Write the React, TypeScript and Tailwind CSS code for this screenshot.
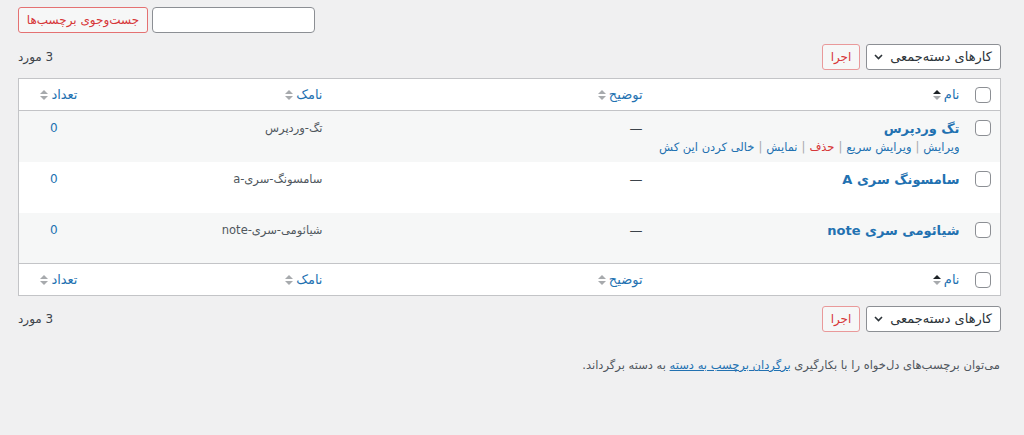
import React from 'react';

type Tag = { name: string; slug: string; count: number; actions?: boolean };

const tags: Tag[] = [
  { name: 'تگ وردپرس', slug: 'تگ-وردپرس', count: 0, actions: true },
  { name: 'سامسونگ سری A', slug: 'سامسونگ-سری-a', count: 0 },
  { name: 'شیائومی سری note', slug: 'شیائومی-سری-note', count: 0 },
];

const SortArrows: React.FC<{ active?: boolean }> = ({ active }) => (
  <svg width="8" height="12" viewBox="0 0 8 12" className="inline-block align-middle">
    <path d="M0 5 L4 1 L8 5 Z" fill={active ? '#1d2327' : '#a7aaad'} />
    <path d="M0 7 L4 11 L8 7 Z" fill="#a7aaad" />
  </svg>
);

const CheckBox: React.FC = () => (
  <span className="block w-4 h-4 rounded-[4px] border border-[#8c8f94] bg-white" />
);

const HeaderRow: React.FC<{ top?: boolean }> = ({ top }) => {
  const border = top ? 'border-b' : 'border-t';
  return (
    <tr className={`${border} border-[#c3c4c7] h-[32px]`}>
      <th className="pr-[9px] align-middle">
        <CheckBox />
      </th>
      <th className="px-[10px] text-right font-normal align-middle">
        <span className="inline-flex items-center gap-[3px] text-[#2271b1]">
          نام <SortArrows active />
        </span>
      </th>
      <th className="px-[10px] text-right font-normal align-middle">
        <span className="inline-flex items-center gap-[3px] text-[#2271b1]">
          توضیح <SortArrows />
        </span>
      </th>
      <th className="px-[10px] text-right font-normal align-middle">
        <span className="inline-flex items-center gap-[3px] text-[#2271b1]">
          نامک <SortArrows />
        </span>
      </th>
      <th className="pr-[9px] text-right font-normal align-middle">
        <span className="inline-flex items-center gap-[3px] text-[#2271b1]">
          تعداد <SortArrows />
        </span>
      </th>
    </tr>
  );
};

const TableNav: React.FC = () => (
  <div className="flex items-center h-[26px]">
    <div className="flex items-center justify-between w-[135px] h-[26px] pr-[8px] pl-[7px] bg-white border border-[#8c8f94] rounded-[3px] text-[13px] text-[#2c3338]">
      <span>کارهای دسته‌جمعی</span>
      <svg width="9" height="6" viewBox="0 0 9 6">
        <path d="M1 1 L4.5 4.5 L8 1" fill="none" stroke="#2c3338" strokeWidth="1.6" />
      </svg>
    </div>
    <button className="mr-[6px] w-[38px] h-[26px] bg-[#f6f7f7] border border-[#e9999a] rounded-[3px] text-[12px] text-[#d63638]">
      اجرا
    </button>
    <span className="mr-auto text-[12px] text-[#3c434a]">3 مورد</span>
  </div>
);

export default function App() {
  return (
    <div
      dir="rtl"
      className="min-h-[435px] bg-[#f0f0f1] pl-[18px] pr-[23px] pt-[7px] font-['DejaVu_Sans',sans-serif] text-[13px] text-[#3c434a]"
    >
      <div className="flex justify-end gap-[4px]">
        <div className="w-[163px] h-[26px] bg-white border border-[#8c8f94] rounded-[4px]" />
        <button className="w-[130px] h-[26px] bg-[#f6f7f7] border border-[#e47172] rounded-[3px] text-[12px] text-[#d63638]">
          جست‌وجوی برچسب‌ها
        </button>
      </div>

      <div className="mt-[11px]">
        <TableNav />
      </div>

      <table className="mt-[8px] w-full table-fixed border border-[#c3c4c7] bg-white text-[13px]">
        <colgroup>
          <col className="w-[31px]" />
          <col />
          <col className="w-[320px]" />
          <col className="w-[246px]" />
          <col className="w-[68px]" />
        </colgroup>
        <thead>
          <HeaderRow top />
        </thead>
        <tbody>
          {tags.map((tag, i) => (
            <tr key={tag.slug} className={i % 2 === 0 ? 'bg-[#f6f7f7]' : 'bg-white'}>
              <td className="h-[51px] pr-[9px] pt-[9px] align-top">
                <CheckBox />
              </td>
              <td className="px-[10px] pt-[8px] align-top">
                <div className="leading-[19px] text-[13px] font-bold text-[#2271b1]">{tag.name}</div>
                {tag.actions && (
                  <div className="leading-[18px] text-[11.5px] text-[#2271b1] whitespace-nowrap">
                    <span>ویرایش</span>
                    <span className="text-[#a7aaad] mx-[4px]">|</span>
                    <span>ویرایش سریع</span>
                    <span className="text-[#a7aaad] mx-[4px]">|</span>
                    <span className="text-[#d63638]">حذف</span>
                    <span className="text-[#a7aaad] mx-[4px]">|</span>
                    <span>نمایش</span>
                    <span className="text-[#a7aaad] mx-[4px]">|</span>
                    <span>خالی کردن این کش</span>
                  </div>
                )}
              </td>
              <td className="px-[10px] pt-[8px] align-top leading-[19px] text-[#3c434a]">—</td>
              <td className="px-[10px] pt-[8px] align-top leading-[19px] text-[11.5px] text-[#50575e]">
                {tag.slug}
              </td>
              <td className="pt-[8px] pl-[2px] align-top leading-[19px] text-center text-[12px] text-[#2271b1]">
                {tag.count}
              </td>
            </tr>
          ))}
        </tbody>
        <tfoot>
          <HeaderRow />
        </tfoot>
      </table>

      <div className="mt-[10px]">
        <TableNav />
      </div>

      <p className="mt-[25px] pr-[1px] text-[11.5px] text-[#50575e]">
        می‌توان برچسب‌های دل‌خواه را با بکارگیری{' '}
        <a className="text-[#2271b1] underline">برگردان برچسب به دسته</a> به دسته برگرداند.
      </p>
    </div>
  );
}
